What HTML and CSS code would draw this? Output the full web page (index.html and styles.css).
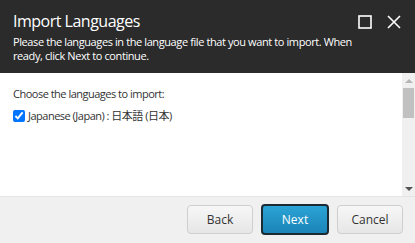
FILE: index.html
```html
<!DOCTYPE html>
<html lang="en">
<head>
    <meta charset="UTF-8">
    <title>Import Languages</title>
    <link rel="stylesheet" href="styles.css">
</head>
<body>
    <div class="dialog">
        <div class="header">
            <div class="header-top">
                <h1>Import Languages</h1>
                <div class="header-buttons">
                    <svg class="icon" width="14" height="14" viewBox="0 0 14 14"><rect x="1" y="1" width="12" height="12" fill="none" stroke="#fff" stroke-width="1.6"/></svg>
                    <svg class="icon" width="14" height="14" viewBox="0 0 14 14"><path d="M1 1 L13 13 M13 1 L1 13" stroke="#fff" stroke-width="1.6"/></svg>
                </div>
            </div>
            <p class="desc">Please the languages in the language file that you want to import. When ready, click Next to continue.</p>
        </div>
        <div class="content">
            <div class="list">
                <p class="prompt">Choose the languages to import:</p>
                <label class="item"><input type="checkbox" checked> Japanese (Japan) : 日本語 (日本)</label>
            </div>
            <div class="scrollbar">
                <div class="arrow up"></div>
                <div class="thumb"></div>
                <div class="track"></div>
                <div class="arrow down"></div>
            </div>
        </div>
        <div class="footer">
            <button class="btn">Back</button>
            <button class="btn primary">Next</button>
            <button class="btn">Cancel</button>
        </div>
    </div>
</body>
</html>
```

FILE: styles.css
```css
body {
    margin: 0;
    font-family: "Open Sans", "Noto Sans CJK JP", sans-serif;
    width: 415px;
    height: 243px;
    overflow: hidden;
}
.dialog {
    display: flex;
    flex-direction: column;
    height: 243px;
}
.header {
    background-color: #2b2b2b;
    color: #fff;
    padding: 9px 13px 0 13px;
    height: 64px;
}
.header-top {
    display: flex;
    justify-content: space-between;
    align-items: flex-start;
}
h1 {
    margin: 0;
    font-size: 16px;
    letter-spacing: -0.5px;
    font-weight: 400;
    line-height: 24px;
}
.header-buttons {
    display: flex;
    gap: 15px;
    padding: 6px 1px 0 0;
}
.desc {
    margin: 2px 0 0 0;
    max-width: 345px;
    font-size: 11px;
    letter-spacing: -0.4px;
    line-height: 13.5px;
}
.content {
    display: flex;
    height: 123px;
    background: #fff;
    border-bottom: 1px solid #e4e4e4;
}
.list {
    flex: 1;
    padding: 13px 13px;
    font-size: 11px;
    letter-spacing: -0.5px;
    color: #333;
}
.prompt {
    margin: 0 0 6px 0;
    line-height: 16px;
}
.item {
    display: flex;
    align-items: center;
    gap: 3px;
    line-height: 16px;
}
.item input {
    margin: 0;
    width: 12px;
    height: 12px;
}
.scrollbar {
    width: 13px;
    background: #f0f0f0;
    display: flex;
    flex-direction: column;
}
.arrow {
    height: 15px;
    display: flex;
    justify-content: center;
    align-items: center;
}
.arrow.up::after {
    content: "";
    border-left: 4px solid transparent;
    border-right: 4px solid transparent;
    border-bottom: 4px solid #b5b5b5;
}
.arrow.down::after {
    content: "";
    border-left: 4px solid transparent;
    border-right: 4px solid transparent;
    border-top: 4px solid #555;
}
.thumb {
    height: 30px;
    margin: 0 1px;
    background: #c1c1c1;
}
.track {
    flex: 1;
}
.footer {
    flex: 1;
    background: #f0f0f0;
    display: flex;
    justify-content: flex-end;
    align-items: flex-start;
    gap: 8px;
    padding: 8px 12px 0 0;
}
.btn {
    width: 66px;
    height: 29px;
    font-family: "Open Sans", sans-serif;
    font-size: 12px;
    color: #333;
    border: 1px solid #cfcfcf;
    border-radius: 4px;
    background: linear-gradient(#f7f7f7, #e6e6e6);
}
.btn.primary {
    width: 68px;
    height: 31px;
    margin-top: -1px;
    color: #fff;
    border: 2px solid #1c2a33;
    background: linear-gradient(#2ba3d5, #1b84b8);
}
```
